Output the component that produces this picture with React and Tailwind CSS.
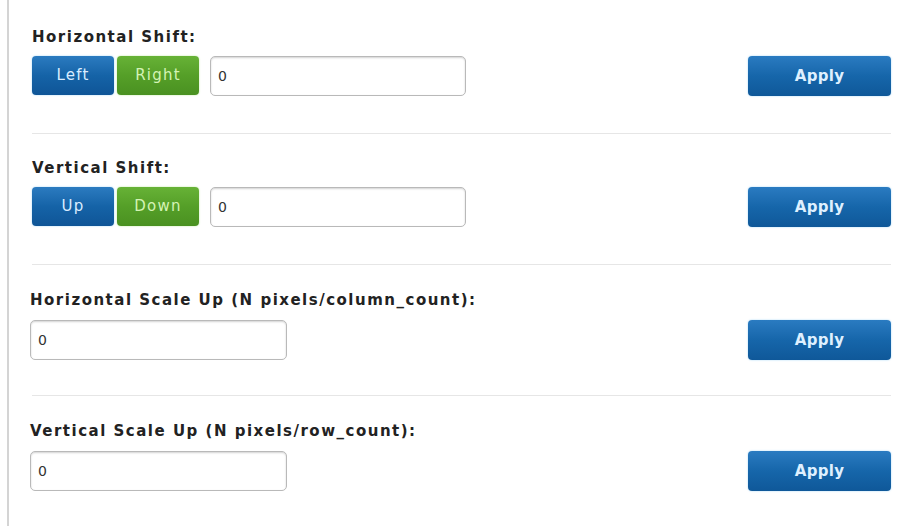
import React from "react";

const font = { fontFamily: '"DejaVu Sans", Verdana, sans-serif' };

function SegBtn({ children, color }) {
  const cls =
    color === "blue"
      ? "bg-gradient-to-b from-[#2b7bc0] via-[#1563a7] to-[#0f5597] text-[#d9ecff] shadow-[0_0_2px_#9fd3f5]"
      : "bg-gradient-to-b from-[#67b236] via-[#559f28] to-[#4a9121] text-[#d4f3b4] shadow-[0_0_2px_#b9e89a]";
  return (
    <button
      className={`h-[39px] w-[82px] rounded-[4px] text-[15px] tracking-[1.2px] ${cls}`}
    >
      {children}
    </button>
  );
}

function Input({ w }) {
  return (
    <input
      readOnly
      value="0"
      className={`h-[40px] ${w} rounded-[5px] border border-[#b9b9b9] bg-white pl-[7px] text-[14px] text-[#333] shadow-[inset_0_1px_2px_rgba(0,0,0,0.18)] outline-none`}
      style={font}
    />
  );
}

function Apply() {
  return (
    <button className="h-[40px] w-[143px] rounded-[4px] bg-gradient-to-b from-[#2a7bc1] via-[#1666aa] to-[#0f5899] text-[15px] font-bold tracking-[0.3px] text-[#dff0ff] shadow-[0_0_2px_#9fd3f5]">
      Apply
    </button>
  );
}

function Label({ children, mb }) {
  return (
    <div
      className={`h-[16px] text-[15px] font-bold leading-[16px] tracking-[1.5px] text-[#222] whitespace-nowrap ${mb}`}
    >
      {children}
    </div>
  );
}

export default function App() {
  return (
    <div className="flex min-h-[526px] w-[912px] bg-white" style={font}>
      <div className="ml-[7px] w-[2px] bg-[#d4d4d4]" />
      <div className="flex-1 pl-[23px] pr-[21px]">
        {/* Horizontal Shift */}
        <div className="flex items-end justify-between border-b border-[#e6e6e6] pt-[29px] pb-[37px]">
          <div>
            <Label mb="mb-[11px]">Horizontal Shift:</Label>
            <div className="flex items-start">
              <SegBtn color="blue">Left</SegBtn>
              <div className="ml-[3px]">
                <SegBtn color="green">Right</SegBtn>
              </div>
              <div className="ml-[11px]">
                <Input w="w-[256px]" />
              </div>
            </div>
          </div>
          <Apply />
        </div>

        {/* Vertical Shift */}
        <div className="flex items-end justify-between border-b border-[#e6e6e6] pt-[26px] pb-[37px]">
          <div>
            <Label mb="mb-[11px]">Vertical Shift:</Label>
            <div className="flex items-start">
              <SegBtn color="blue">Up</SegBtn>
              <div className="ml-[3px]">
                <SegBtn color="green">Down</SegBtn>
              </div>
              <div className="ml-[11px]">
                <Input w="w-[256px]" />
              </div>
            </div>
          </div>
          <Apply />
        </div>

        {/* Horizontal Scale Up */}
        <div className="flex items-end justify-between border-b border-[#e6e6e6] pt-[27px] pb-[35px]">
          <div className="-ml-[2px]">
            <Label mb="mb-[12px]">Horizontal Scale Up (N pixels/column_count):</Label>
            <Input w="w-[257px]" />
          </div>
          <Apply />
        </div>

        {/* Vertical Scale Up */}
        <div className="flex items-end justify-between pt-[27px]">
          <div className="-ml-[2px]">
            <Label mb="mb-[12px]">Vertical Scale Up (N pixels/row_count):</Label>
            <Input w="w-[257px]" />
          </div>
          <Apply />
        </div>
      </div>
    </div>
  );
}
